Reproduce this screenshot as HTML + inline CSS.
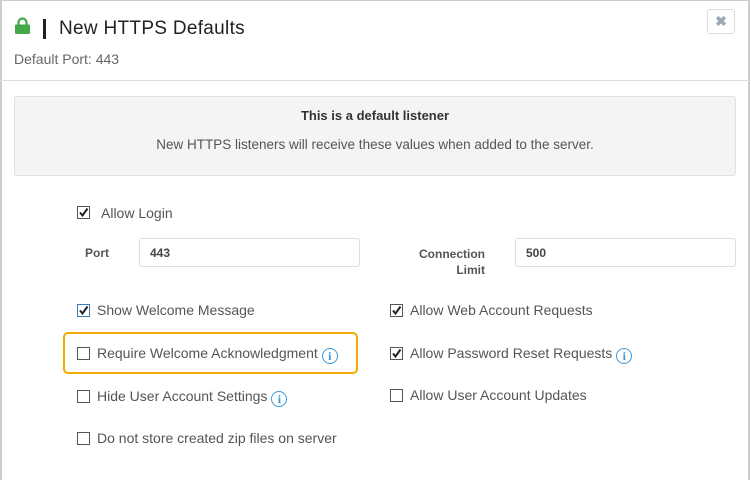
<!DOCTYPE html>
<html><head><style>
body{margin:0;width:751px;height:470px;overflow:hidden;background:#fff;font-family:"Liberation Sans",sans-serif;color:#555;position:relative}
.a{position:absolute}
.frame{left:0;top:0;width:750px;height:480px;border:1px solid #ccc;border-width:1px 2px 0 2px;box-sizing:border-box}
.cb{position:absolute;width:11px;height:11px;border:1px solid #555;background:#fff}
.cb svg{position:absolute;left:0;top:0}
.t{position:absolute;font-size:14px;color:#555;white-space:nowrap}
.inp{position:absolute;border:1px solid #ddd;border-radius:3px;height:29px;box-sizing:border-box;font-size:12px;font-weight:bold;color:#444;padding:7px 10px}
.lbl{position:absolute;font-size:12px;font-weight:bold;color:#555}
.info{display:inline-block;width:14px;height:14px;border:1.5px solid #3a9ad9;border-radius:50%;color:#3a9ad9;font:bold 12px "Liberation Serif",serif;text-align:center;line-height:14px;vertical-align:-2px;margin-left:4px}
</style></head><body>
<div class="a frame"></div>
<svg class="a" style="left:14px;top:17px" width="17" height="17" viewBox="0 0 17 17"><path d="M4.5 8V5.5a4 4 0 0 1 8 0V8" fill="none" stroke="#43a848" stroke-width="2.2"/><rect x="1" y="7.5" width="15" height="9.5" rx="1" fill="#43a848"/></svg>
<div class="a" style="left:43px;top:19px;width:3px;height:20px;background:#222"></div>
<div class="t" style="left:59px;top:18px;font-size:19px;color:#222;letter-spacing:0.3px">New HTTPS Defaults</div>
<div class="t" style="left:14px;top:51px;color:#666">Default Port: 443</div>
<div class="a" style="left:707px;top:9px;width:28px;height:25px;border:1px solid #ddd;border-radius:3px;box-sizing:border-box;color:#9aa7b5;font-weight:bold;font-size:14px;text-align:center;line-height:23px">✖</div>
<div class="a" style="left:0;top:80px;width:751px;height:1px;background:#ddd"></div>
<div class="a" style="left:14px;top:96px;width:722px;height:80px;background:#f4f4f4;border:1px solid #e0e0e0;border-radius:3px;box-sizing:border-box"></div>
<div class="t" style="left:14px;width:722px;text-align:center;top:108px;font-size:13px;font-weight:bold;color:#333">This is a default listener</div>
<div class="t" style="left:14px;width:722px;text-align:center;top:137px;font-size:13.5px">New HTTPS listeners will receive these values when added to the server.</div>

<div class="cb" style="left:77px;top:206px"><svg width="11" height="11"><path d="M2 5.5l2.5 3L9.5 1.5" fill="none" stroke="#222" stroke-width="2"/></svg></div>
<div class="t" style="left:101px;top:205px">Allow Login</div>
<div class="lbl" style="left:85px;top:246px">Port</div>
<div class="inp" style="left:139px;top:238px;width:221px">443</div>
<div class="lbl" style="left:380px;width:105px;text-align:right;top:246px;line-height:16px">Connection<br>Limit</div>
<div class="inp" style="left:515px;top:238px;width:221px">500</div>

<div class="cb" style="left:77px;top:304px;border-color:#3a7ec0"><svg width="11" height="11"><path d="M2 5.5l2.5 3L9.5 1.5" fill="none" stroke="#222" stroke-width="2"/></svg></div>
<div class="t" style="left:97px;top:302px">Show Welcome Message</div>
<div class="a" style="left:63px;top:332px;width:295px;height:42px;border:2px solid #f2a900;border-radius:5px;box-sizing:border-box"></div>
<div class="cb" style="left:77px;top:347px"></div>
<div class="t" style="left:97px;top:345px">Require Welcome Acknowledgment<span class="info">i</span></div>
<div class="cb" style="left:77px;top:390px"></div>
<div class="t" style="left:97px;top:388px">Hide User Account Settings<span class="info">i</span></div>
<div class="cb" style="left:77px;top:432px"></div>
<div class="t" style="left:97px;top:430px">Do not store created zip files on server</div>

<div class="cb" style="left:390px;top:304px"><svg width="11" height="11"><path d="M2 5.5l2.5 3L9.5 1.5" fill="none" stroke="#222" stroke-width="2"/></svg></div>
<div class="t" style="left:410px;top:302px">Allow Web Account Requests</div>
<div class="cb" style="left:390px;top:347px"><svg width="11" height="11"><path d="M2 5.5l2.5 3L9.5 1.5" fill="none" stroke="#222" stroke-width="2"/></svg></div>
<div class="t" style="left:410px;top:345px">Allow Password Reset Requests<span class="info">i</span></div>
<div class="cb" style="left:390px;top:389px"></div>
<div class="t" style="left:410px;top:387px">Allow User Account Updates</div>
</body></html>
